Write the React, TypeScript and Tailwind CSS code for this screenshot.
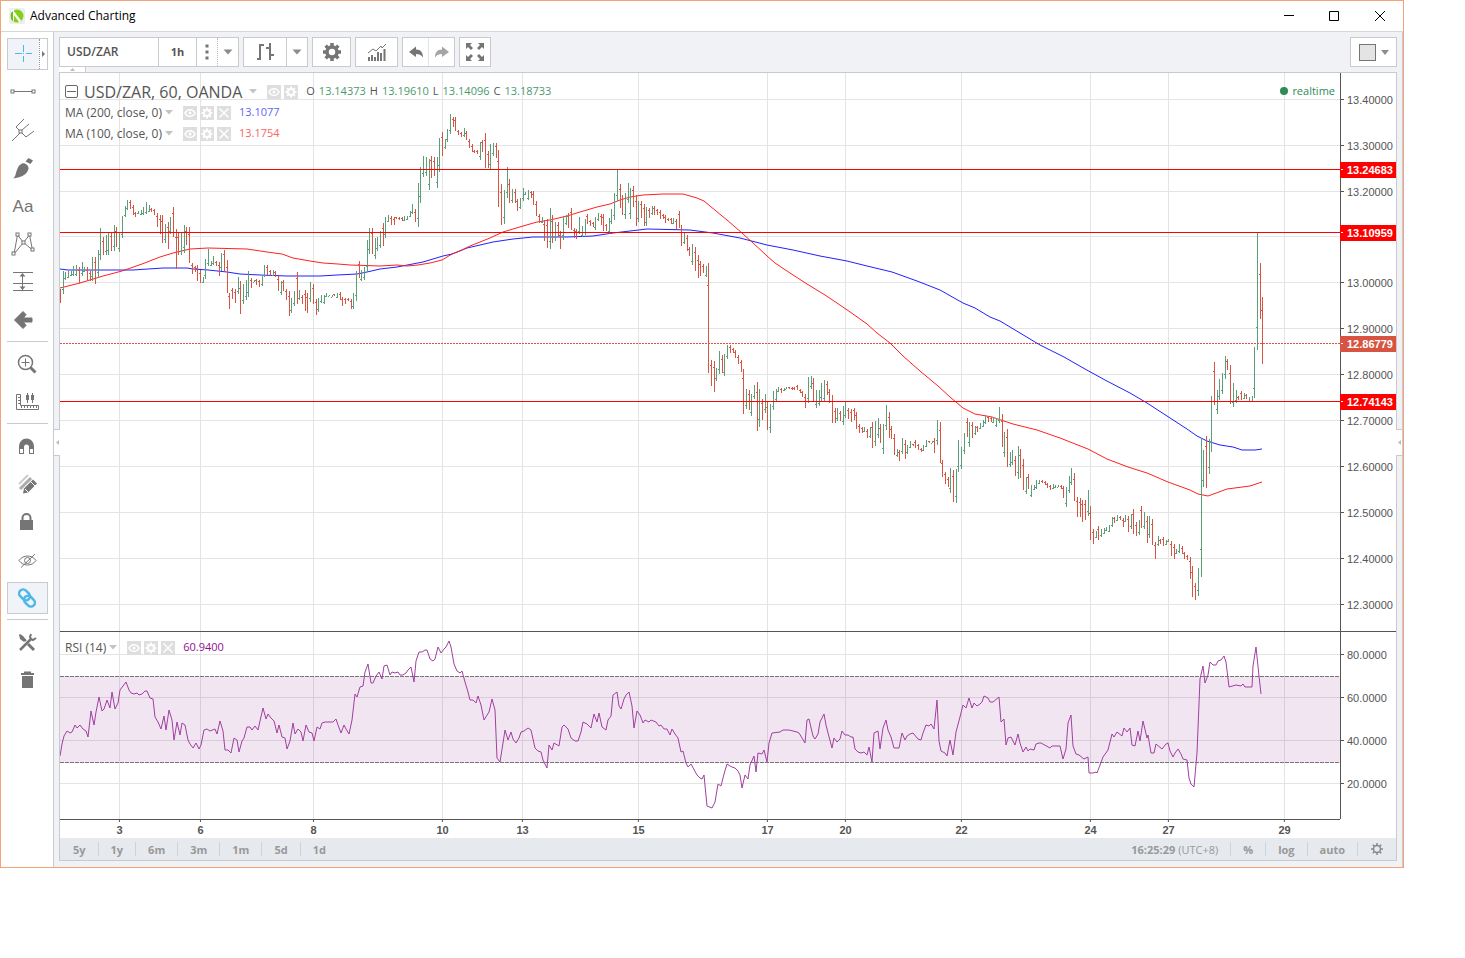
import React from 'react';

const GRID_X = [119, 200, 313, 442, 522, 638, 767, 845, 961, 1090, 1168, 1284];
const DAYS = ['3', '6', '8', '10', '13', '15', '17', '20', '22', '24', '27', '29'];

const PRICES = [13.4, 13.3, 13.2, 13.1, 13.0, 12.9, 12.8, 12.7, 12.6, 12.5, 12.4, 12.3];
const RSI_TICKS = [80, 60, 40, 20];
const RANGES = ['5y', '1y', '6m', '3m', '1m', '5d', '1d'];

const LEVELS = [
  { price: 13.24683, live: false },
  { price: 13.10959, live: false },
  { price: 12.86779, live: true },
  { price: 12.74143, live: false },
];

// Canvas space: x 60..1340, price pane y 73..631, RSI pane y 632..819
const LEFT = 60;
const WIDTH = 1280;
const PRICE_TOP = 73;
const PRICE_H = 558;
const RSI_TOP = 632;
const RSI_H = 187;
const BAR_STEP = 2.69;

const priceY = (p: number) => Math.floor(99.2 + (13.4 - p) * 459.1);
const rsiY = (v: number) => Math.floor(654.5 + (80 - v) * 2.15);
const pct = (v: number, start: number, size: number) => `${((v + 0.5 - start) / size) * 100}%`;

// + closes up, - closes down; high,low
const BARS = `-289,303 +271,294 +272,280 +271,278 +271,276 +266,276 +265,276 -267,283 +262,276 +267,272 -267,280 -271,281
+257,281 -257,284 +250,278 +228,260 -237,255 +235,255 +232,255 -232,251 +225,251 -227,247 +233,252 +216,238 +206,217 +200,210
-200,209 -205,215 -212,217 +211,214 +210,215 +207,215 +202,214 +205,212 -208,212 -209,215 -213,227 -215,234 -215,243 +224,243
-222,249 +217,234 -207,237 -229,269 -233,255 +233,255 +225,253 -227,245 -227,263 -263,274 -266,272 -265,281 -270,283 +277,283
+259,279 +249,266 +261,266 +256,265 -261,266 -262,276 +253,271 -250,271 -260,293 -293,309 -288,299 -289,303 +277,294 -281,314
+284,304 +280,300 +271,297 -278,288 +280,282 -279,285 -280,287 +276,286 +265,277 -265,275 -270,276 +270,276 -271,277 -276,291
+281,295 -280,291 -289,300 -291,316 +298,313 +291,306 -272,304 +290,300 -295,304 -290,311 -293,313 +282,302 -284,304 -299,315
+298,312 +295,303 +295,304 +293,297 +295,296 +295,297 -294,296 +293,298 -292,300 -297,306 -298,304 -298,301 -299,309 +293,309
+271,301 -261,278 +270,281 +267,280 +240,272 +228,254 -228,254 +238,259 +237,251 +231,248 -223,246 +217,238 +215,222 -216,225
-217,225 -217,219 -217,220 -217,221 +216,221 +216,220 +211,217 +204,214 -209,222 +183,227 +167,203 +156,177 +157,176 +159,190
-156,178 -157,176 +157,188 +138,172 -132,156 +139,149 +129,142 +114,134 -117,127 -117,131 -130,135 -132,137 +128,137 -131,140
-139,148 -144,152 -150,153 -150,154 +142,160 -140,152 -133,168 -151,168 +144,169 +143,156 -143,158 -150,207 -184,225 +190,224
+167,198 -179,203 +189,203 -189,203 -199,211 +198,209 +188,201 +192,195 +190,200 -191,198 -191,205 -201,216 -214,223 +217,223
-220,241 -219,248 +208,249 -215,243 +222,241 -222,237 -231,249 +216,240 +215,225 -213,228 -208,230 -228,238 -229,239 +217,234
+226,237 +219,235 -214,224 -220,226 -222,227 +217,230 +213,221 -214,225 -214,231 -224,231 +218,234 +209,224 +193,220 +169,201
-184,208 -195,215 +193,219 +183,203 +188,219 -186,207 -195,226 +201,222 -201,218 -204,226 +207,226 -208,218 +206,215 -206,215
-209,215 -210,219 -214,219 -215,223 -218,221 -218,224 +218,224 -219,229 -211,228 -225,246 +232,244 -235,251 -247,256 +244,265
-247,271 -255,278 -261,276 -264,273 +266,277 -263,373 -360,386 -361,392 +368,381 +351,374 -355,373 +354,376 +345,359 -345,353
-348,353 -350,358 -355,364 -360,372 -369,414 +389,409 -390,410 +394,416 +385,399 -382,431 +389,427 -399,420 +394,413 -401,430
+404,433 +391,410 +389,401 +387,392 -388,393 +388,391 +387,389 -387,389 -387,390 -387,390 -385,390 -389,393 -391,397 -394,408
+377,403 +376,389 -378,402 +390,408 +390,406 +383,401 +380,402 -381,395 -389,403 -395,423 -408,423 +408,421 -411,421 +406,425
+401,418 -408,419 -409,422 -408,420 -412,429 -424,433 -427,433 +427,432 -429,438 +427,438 -422,448 +421,446 +418,438 -424,443
+424,454 +405,430 -412,438 -426,439 -434,455 +449,457 -450,461 +438,454 -440,459 +445,454 +441,448 -444,446 -440,448 -444,450
-448,452 +445,451 +440,447 -441,443 +441,443 -438,453 +420,445 -422,463 -460,477 -472,484 -477,487 +468,493 -470,502 +469,503
+440,472 +447,469 +433,454 -418,437 +422,447 -422,438 +426,435 -426,432 +423,429 +420,427 +415,424 -416,422 -417,422 +417,423
+418,427 +407,423 -414,447 +432,457 -429,467 +452,467 +450,465 -456,476 +446,479 -449,478 -459,490 +477,494 -474,489 +485,497
+485,490 +480,489 +480,484 -480,483 -481,485 -483,488 -485,490 +484,489 +485,488 +485,487 -485,489 -486,498 +487,507 +476,493
+468,485 -473,501 -497,517 -498,517 -500,522 -500,520 +490,516 -506,540 -529,544 +531,538 -526,540 +529,537 +528,534 +527,531
+525,532 +517,527 -517,523 +515,521 -516,520 -518,527 +515,522 -516,532 +514,529 -509,534 -522,536 +520,535 -506,528 +512,529
-516,543 +516,538 -519,545 -542,559 +536,546 -539,544 -537,546 +540,545 +539,542 -541,556 -544,559 +549,554 +544,553 -546,554
-552,559 -555,560 -557,579 -566,597 -583,600 +568,596 +438,577 +450,487 -436,488 +439,474 +396,452 -362,405 +390,414 +379,400
+373,394 +356,379 -359,370 -365,404 +383,407 +390,403 -396,400 -391,400 +393,399 -394,399 +397,402 +396,402 +347,398 +233,350
-263,319 -297,364`
  .split(/\s+/)
  .map((token, i) => {
    const [high, low] = token.slice(1).split(',').map(Number);
    return { x: Math.floor(60.5 + BAR_STEP * i) + 0.5, high, low, up: token[0] === '+' };
  });

const MA_100 =
  '60,288 80,283 103,276 122,271 142,264 160,257 173,253 190,249 208,248 247,249 267,252 282,254 293,258 310,261 323,263 338,264 350,265 380,266 397,265 407,266 418,265 430,263 442,260 452,254 460,251 470,246 490,238 503,232 513,229 523,226 537,222 550,220 567,216 580,212 597,207 610,204 620,200 630,197 643,195 663,194 683,194 690,196 697,198 704,201 710,206 727,220 742,233 752,242 767,256 775,263 790,273 807,284 825,295 837,303 853,314 867,324 877,333 890,343 903,356 920,371 938,386 950,397 963,408 975,414 992,417 1013,424 1037,430 1060,438 1088,449 1107,459 1128,467 1147,473 1168,482 1190,490 1198,494 1208,496 1227,489 1250,486 1262,482';
const MA_200 =
  '60,269 68,270 133,270 148,269 163,268 187,268 193,269 208,270 227,272 240,274 260,275 287,276 320,276 337,275 357,274 367,272 380,269 397,267 423,262 443,256 452,254 467,248 493,242 513,239 533,237 567,237 593,236 613,233 630,231 647,229 690,230 713,233 740,238 767,245 793,250 820,256 847,261 867,266 892,272 917,281 940,290 963,303 975,308 990,317 1000,321 1020,333 1040,345 1064,357 1085,369 1105,380 1130,393 1147,403 1167,416 1187,429 1197,436 1207,441 1220,445 1233,447 1242,450 1255,450 1262,449';
const RSI =
  '60,756 62,744 64,736 67,731 70,733 72,732 75,725 77,728 80,725 83,729 86,731 88,737 91,711 94,725 96,712 99,697 102,711 104,709 107,700 110,708 112,692 115,709 118,703 120,690 123,686 126,682 129,690 131,693 134,694 137,693 139,695 142,694 145,691 147,691 150,698 153,699 155,717 158,722 161,729 164,716 166,730 169,710 172,720 174,740 177,722 180,735 182,723 185,725 188,740 190,744 193,748 196,743 199,749 201,745 204,730 207,729 210,731 215,729 217,734 220,721 223,731 225,750 228,750 231,753 234,738 237,740 239,752 242,741 244,738 247,727 250,727 252,730 255,726 258,730 260,721 263,708 266,719 268,714 271,718 274,721 277,733 279,725 282,737 285,738 287,749 290,741 293,723 295,734 298,729 301,732 303,741 306,725 309,732 312,733 314,741 317,727 320,729 322,723 325,722 333,722 336,719 338,725 341,733 344,725 346,729 349,734 352,720 355,694 357,697 360,687 363,686 365,672 368,664 371,683 373,683 376,676 379,672 382,679 384,666 387,665 390,675 392,672 395,673 398,672 400,675 403,675 406,673 408,670 411,667 414,682 416,661 419,652 422,652 425,650 427,650 430,659 433,661 435,659 438,647 441,653 444,649 446,647 449,641 451,647 454,664 457,671 460,673 462,671 465,682 468,692 470,700 473,700 476,703 478,696 481,705 484,720 489,712 492,699 495,710 497,758 500,762 503,743 505,730 508,740 511,732 513,739 516,743 519,738 521,732 524,731 528,728 531,730 533,739 535,748 538,751 541,752 543,760 547,768 549,745 552,750 554,743 559,746 562,727 564,725 568,729 571,738 575,741 578,741 581,732 583,722 587,724 591,728 594,714 597,722 599,713 602,727 606,730 608,720 611,716 613,695 617,692 619,706 621,709 624,699 626,695 629,692 632,706 634,728 637,711 640,715 643,723 645,720 649,722 651,720 656,722 659,726 661,725 664,729 667,729 670,735 672,729 675,734 678,738 681,752 683,751 686,763 688,767 691,764 697,775 700,778 702,779 704,775 707,806 712,808 715,802 718,784 721,786 724,774 727,764 730,766 732,767 735,768 738,771 740,775 742,788 745,775 748,779 750,765 754,756 756,772 758,753 762,754 764,750 767,762 769,743 772,733 780,732 783,730 789,730 797,732 799,733 805,743 807,720 809,719 813,736 815,739 818,734 820,722 824,714 826,725 828,733 832,748 834,738 837,742 840,739 842,731 845,735 848,735 851,737 853,737 855,749 858,752 861,753 864,752 867,755 869,747 872,762 874,733 878,731 880,749 883,728 886,720 888,730 891,737 894,748 899,748 902,733 905,740 907,736 910,734 913,733 918,739 921,740 923,733 926,725 929,726 931,724 934,729 937,700 939,741 941,751 945,753 947,756 950,740 953,755 956,732 960,717 963,705 966,708 969,698 972,708 974,703 977,706 980,704 982,702 984,696 988,698 990,702 993,702 999,697 1001,722 1004,719 1006,745 1008,738 1011,737 1015,745 1018,734 1020,743 1023,752 1026,747 1028,751 1030,749 1034,750 1036,744 1039,743 1041,743 1050,748 1052,746 1060,746 1063,759 1066,749 1068,723 1071,715 1073,746 1076,754 1079,755 1084,759 1088,757 1089,773 1093,773 1096,772 1097,773 1103,757 1108,750 1112,734 1114,737 1117,732 1122,736 1124,728 1127,732 1130,728 1132,745 1135,746 1138,731 1140,741 1143,721 1147,738 1148,735 1151,753 1154,753 1156,744 1162,749 1166,744 1168,743 1170,751 1173,757 1175,753 1178,749 1181,754 1183,759 1187,760 1189,778 1191,784 1194,787 1197,753 1200,679 1203,666 1205,683 1208,675 1210,662 1213,665 1216,665 1218,661 1221,660 1224,656 1226,662 1229,687 1236,685 1241,686 1243,684 1245,687 1252,687 1253,666 1256,647 1259,676 1261,694';

/* ---------- icons, all drawn around a 0,0 centre ---------- */

const Icon: React.FC<{ size?: number; children: React.ReactNode }> = ({ size = 28, children }) => (
  <svg width={size} height={size} viewBox={`${-size / 2} ${-size / 2} ${size} ${size}`} fill="none" aria-hidden="true" className="shrink-0">
    {children}
  </svg>
);

const Node: React.FC<{ x: number; y: number }> = ({ x, y }) => (
  <rect x={x - 1.5} y={y - 1.5} width="3" height="3" fill="#fff" stroke="#757575" />
);

const Caret: React.FC = () => (
  <svg width="10" height="6" viewBox="0 0 10 6" aria-hidden="true" className="shrink-0">
    <path d="M0.5 0.5h9L5 5.5z" fill="#8c8c8c" />
  </svg>
);

const GEAR_TEETH = [0, 45, 90, 135, 180, 225, 270, 315];

const GearIcon: React.FC<{ size: number; color: string; ring: number; tooth: number; stroke: number }> = ({ size, color, ring, tooth, stroke }) => (
  <Icon size={size}>
    <circle r={ring} stroke={color} strokeWidth={stroke} />
    {GEAR_TEETH.map((a) => (
      <path key={a} d={`M0 ${-ring}V${-ring - tooth}`} stroke={color} strokeWidth={stroke} transform={`rotate(${a})`} />
    ))}
  </Icon>
);

const CrosshairIcon = () => (
  <Icon>
    <path d="M-9-.5h7M2-.5h6M-.5-9v7M-.5 2v6" stroke="#4cb8e6" />
    <path d="M-1-1h1v1h-1z" fill="#4cb8e6" />
  </Icon>
);

const DRAW_TOOLS = [
  {
    label: 'Trend line',
    icon: (
      <Icon>
        <path d="M-9-.5H9" stroke="#757575" />
        <Node x={-10.5} y={-0.5} />
        <Node x={10.5} y={-0.5} />
      </Icon>
    ),
  },
  {
    label: 'Pitchfork',
    icon: (
      <Icon>
        <path d="M-11 11l8-8M1-11l-8 8L3 7l8-6M-1 0l7-6" stroke="#757575" />
        <Node x={-2.5} y={1.5} />
      </Icon>
    ),
  },
  {
    label: 'Brush',
    icon: (
      <Icon>
        <path d="M-10 10.5C-6 9-8-1-1-4.500c3-1 7 2 6.500 5.500C4 7-3 9.500-10 10.500z" fill="#757575" />
        <path d="M2.500-6.500L5.500-10l4.500 2.500-2.500 3.500z" fill="#757575" />
      </Icon>
    ),
  },
  { label: 'Text', icon: <span className="font-['Liberation_Sans',sans-serif] text-[17px] leading-none text-[#757575]">Aa</span> },
  {
    label: 'Pattern',
    icon: (
      <Icon>
        <path d="M-9 10L-5.500-9 .5-1.500 6.500-9l3 15-9-7.500z" stroke="#757575" />
        <Node x={-5.5} y={-9.5} />
        <Node x={6.5} y={-9.5} />
        <Node x={0.5} y={-1.5} />
        <Node x={-9.5} y={9.5} />
        <Node x={9.5} y={5.5} />
      </Icon>
    ),
  },
  {
    label: 'Long position',
    icon: (
      <Icon>
        <path d="M-10-9.500H10M-10 1.500H10M-10 8.500H10M-.5-8V8" stroke="#757575" />
        <path d="M-.5-9l3 3.500h-6zM-.5 8l3-3.500h-6z" fill="#757575" />
      </Icon>
    ),
  },
  {
    label: 'Arrow mark left',
    icon: (
      <Icon>
        <path d="M-8.500 0L0-8.500l3 3L.5-2H9v4H.5L3 5.500l-3 3z" fill="#757575" stroke="#757575" strokeLinejoin="round" />
      </Icon>
    ),
  },
];

const VIEW_TOOLS = [
  {
    label: 'Zoom in',
    icon: (
      <Icon>
        <circle cx="-1.500" cy="-1.500" r="7" stroke="#757575" strokeWidth="1.500" />
        <path d="M-5.500-1.500h8M-1.500-5.500v8" stroke="#757575" />
        <path d="M3.500 3.500l5 5" stroke="#757575" strokeWidth="3" />
      </Icon>
    ),
  },
  {
    label: 'Measure',
    icon: (
      <Icon>
        <path d="M-10.500-7.500h4v11h18v4h-22z" stroke="#757575" />
        <path d="M-9-4.500h2M-9-1.500h2M-9 1.500h2M-5.500 4v2M-2.500 4v2M.5 4v2M3.500 4v2M6.500 4v2M9.500 4v2M.5-9v10M5.500-9v10" stroke="#757575" />
        <path d="M-1-7h3v5h-3zM4-7h3v5H4z" fill="#757575" />
      </Icon>
    ),
  },
];

const MODE_TOOLS = [
  {
    label: 'Magnet mode',
    icon: (
      <Icon>
        <path d="M-8 8V0a7.500 7.500 0 0 1 15 0v8H2V1a2.500 2.500 0 0 0-5 0v7z" fill="#757575" />
        <path d="M-7 3h3v4h-3zM3 3h3v4H3z" fill="#fff" />
      </Icon>
    ),
  },
  {
    label: 'Stay in drawing mode',
    icon: (
      <Icon>
        <path d="M-8 0l9-9" stroke="#ccc" strokeWidth="2" />
        <path d="M-7 5L4-6" stroke="#aaa" strokeWidth="3" />
        <path d="M-4 9.500l1-5 9-9 4 4-9 9z" fill="#757575" />
        <path d="M-2 5l3 3M4-2l4 4" stroke="#fff" />
      </Icon>
    ),
  },
  {
    label: 'Lock drawings',
    icon: (
      <Icon>
        <path d="M-7-2H6v10H-7z" fill="#757575" />
        <path d="M-4.500-2v-2a4 4 0 0 1 8 0v2" stroke="#757575" strokeWidth="2" />
      </Icon>
    ),
  },
  {
    label: 'Hide drawings',
    icon: (
      <Icon>
        <path d="M-8 .5C-4-5.500 5-5.500 9 .5 5 6.500-4 6.500-8 .5z" stroke="#757575" />
        <circle cx=".5" cy=".5" r="3" stroke="#757575" />
        <path d="M-6 7.500L8-6" stroke="#757575" />
      </Icon>
    ),
  },
];

const LinkIcon = () => (
  <Icon>
    <g stroke="#4cb8e6" strokeWidth="2.500" transform="translate(-1 0) rotate(45)">
      <rect x="-10" y="-4.500" width="12" height="8" rx="4" />
      <rect x="-2" y="-3.500" width="12" height="8" rx="4" />
    </g>
  </Icon>
);

const EDIT_TOOLS = [
  {
    label: 'Drawing settings',
    icon: (
      <Icon>
        <path d="M-7 8L4-3" stroke="#757575" strokeWidth="2.500" />
        <path d="M4-8l-1 3 1 2 2 1 3-2M-7-7L-1-1" stroke="#757575" strokeWidth="2" />
        <path d="M-8-8l4 2 3 4-2 2-4-3z" fill="#757575" />
        <path d="M1 2l6 6" stroke="#757575" strokeWidth="3" />
      </Icon>
    ),
  },
  {
    label: 'Remove drawings',
    icon: (
      <Icon>
        <path d="M-6-6H7M-3-7.500h7" stroke="#757575" strokeWidth="2" />
        <path d="M-5-4H6V8H-5z" fill="#757575" />
      </Icon>
    ),
  },
];

/* ---------- legend ---------- */

const MiniButton: React.FC<{ label: string; children: React.ReactNode }> = ({ label, children }) => (
  <button type="button" aria-label={label} className="flex size-[14px] items-center justify-center bg-[#dedede]">
    {children}
  </button>
);

const EyeMini = () => (
  <MiniButton label="Show or hide">
    <Icon size={14}>
      <path d="M-5 0C-3-4.500 3-4.500 5 0 3 4.500-3 4.500-5 0z" stroke="#fff" strokeWidth="1.500" />
      <circle r="1.500" fill="#fff" />
    </Icon>
  </MiniButton>
);

const GearMini = () => (
  <MiniButton label="Format">
    <GearIcon size={14} color="#fff" ring={3} tooth={2.5} stroke={2} />
  </MiniButton>
);

const CloseMini = () => (
  <MiniButton label="Remove">
    <Icon size={14}>
      <path d="M-4.500-4.500l9 9M4.500-4.500l-9 9" stroke="#fff" strokeWidth="1.500" />
    </Icon>
  </MiniButton>
);

const LegendCaret = () => (
  <svg width="8" height="5" viewBox="0 0 8 5" aria-hidden="true">
    <path d="M0 0h8L4 4.500z" fill="#c4c4c4" />
  </svg>
);

const StudyRow: React.FC<{ name: string; value: string; color: string }> = ({ name, value, color }) => (
  <div className="flex h-[21px] items-center text-[12px] text-[#555]">
    <span>{name}</span>
    <span className="ml-[3px] mr-[10px]">
      <LegendCaret />
    </span>
    <div className="flex gap-[3px]">
      <EyeMini />
      <GearMini />
      <CloseMini />
    </div>
    <span className={`ml-2 text-[11px] ${color}`}>{value}</span>
  </div>
);

const OHLC = [
  ['O', '13.14373'],
  ['H', '13.19610'],
  ['L', '13.14096'],
  ['C', '13.18733'],
];

const PriceLegend = () => (
  <div className="absolute left-[5px] top-[8px]">
    <div className="flex h-[21px] items-center text-[#555]">
      <button type="button" aria-label="Collapse legend" className="relative mr-[6px] size-[13px] rounded-[2px] border border-[#666]">
        <span className="absolute inset-x-[1px] top-[5px] h-px bg-[#666]"></span>
      </button>
      <span className="text-[16px] leading-none">USD/ZAR, 60, OANDA</span>
      <span className="ml-[7px] mr-[10px]">
        <LegendCaret />
      </span>
      <div className="flex gap-[3px]">
        <EyeMini />
        <GearMini />
      </div>
      <dl className="ml-2 flex gap-1 text-[11px]">
        {OHLC.map(([k, v]) => (
          <div key={k} className="flex gap-1">
            <dt>{k}</dt>
            <dd className="text-[#4a9a6d]">{v}</dd>
          </div>
        ))}
      </dl>
    </div>
    <StudyRow name="MA (200, close, 0)" value="13.1077" color="text-[#6464fa]" />
    <StudyRow name="MA (100, close, 0)" value="13.1754" color="text-[#fa6464]" />
  </div>
);

/* ---------- chart panes ---------- */

const Grid: React.FC<{ rows: number[]; top: number; height: number }> = ({ rows, top, height }) => (
  <path
    d={GRID_X.map((x) => `M${x + 0.5} ${top}v${height}`).join('') + rows.map((y) => `M${LEFT} ${y + 0.5}h${WIDTH}`).join('')}
    stroke="#e4e4e4"
    shapeRendering="crispEdges"
  />
);

const PricePlot = () => (
  <svg viewBox={`${LEFT} ${PRICE_TOP} ${WIDTH} ${PRICE_H}`} preserveAspectRatio="none" fill="none" className="block h-full w-full" role="img" aria-label="USD/ZAR hourly bars">
    <Grid rows={PRICES.map(priceY)} top={PRICE_TOP} height={PRICE_H} />
    <polyline points={MA_200} stroke="#2020ff" />
    <polyline points={MA_100} stroke="#ff2020" />
    <g shapeRendering="crispEdges">
      {BARS.map(({ x, high, low, up }) => {
        const span = low - high;
        const open = Math.round(up ? low - span * 0.2 : high + span * 0.2) + 0.5;
        return <path key={x} d={`M${x} ${high}V${low}M${x - 1.5} ${open}h1`} stroke={up ? '#5b9e7a' : '#d75442'} />;
      })}
      {LEVELS.map(({ price, live }) => (
        <path
          key={price}
          d={`M${LEFT} ${priceY(price) + 0.5}h${WIDTH}`}
          stroke={live ? '#d75442' : '#ff0000'}
          strokeDasharray={live ? '2 1' : undefined}
        />
      ))}
    </g>
  </svg>
);

const RsiPlot = () => (
  <svg viewBox={`${LEFT} ${RSI_TOP} ${WIDTH} ${RSI_H}`} preserveAspectRatio="none" fill="none" className="block h-full w-full" role="img" aria-label="RSI 14">
    <Grid rows={RSI_TICKS.map(rsiY)} top={RSI_TOP} height={RSI_H} />
    <rect x={LEFT} y="676" width={WIDTH} height="87" fill="#800080" fillOpacity="0.1" />
    <path d={`M${LEFT} 676.500h${WIDTH}M${LEFT} 762.500h${WIDTH}`} stroke="#777" strokeDasharray="4 1" shapeRendering="crispEdges" />
    <polyline points={RSI} stroke="#a040a0" />
  </svg>
);

const AxisLabel: React.FC<{ top: string; text: string }> = ({ top, text }) => (
  <div className="absolute inset-x-0 flex -translate-y-1/2 items-center gap-[3px]" style={{ top }}>
    <span className="h-px w-[3px] bg-[#555]"></span>
    <span>{text}</span>
  </div>
);

const PriceAxis = () => (
  <div className="relative w-[56px] shrink-0 border-l border-[#555] text-[11px] leading-4 text-[#555]">
    {PRICES.filter((p) => p !== 13.1).map((p) => (
      <AxisLabel key={p} top={pct(priceY(p), PRICE_TOP, PRICE_H)} text={p.toFixed(5)} />
    ))}
    {LEVELS.map(({ price, live }) => (
      <div
        key={price}
        className={`absolute -left-px right-0 flex h-4 -translate-y-1/2 items-center gap-1 font-bold text-white ${live ? 'bg-[#d75442]' : 'bg-[#ff0000]'}`}
        style={{ top: pct(priceY(price), PRICE_TOP, PRICE_H) }}
      >
        <span className="ml-px h-px w-[2px] bg-white"></span>
        {price.toFixed(5)}
      </div>
    ))}
  </div>
);

const RsiAxis = () => (
  <div className="relative w-[56px] shrink-0 border-l border-[#555] text-[11px] leading-4 text-[#555]">
    {RSI_TICKS.map((v) => (
      <AxisLabel key={v} top={pct(rsiY(v), RSI_TOP, RSI_H)} text={v.toFixed(4)} />
    ))}
  </div>
);

const TimeAxis = () => (
  <div className="flex h-[19px]">
    <div className="relative flex-1 border-t border-[#555] text-[11px] font-bold leading-4 text-[#555]">
      {GRID_X.map((x, i) => (
        <div key={x} className="absolute top-0 flex -translate-x-1/2 flex-col items-center" style={{ left: pct(x, LEFT, WIDTH) }}>
          <span className="h-[2px] w-px bg-[#555]"></span>
          <span>{DAYS[i]}</span>
        </div>
      ))}
    </div>
    <div className="w-[56px] shrink-0"></div>
  </div>
);

/* ---------- bars around the chart ---------- */

const TitleBar = () => (
  <header className="flex h-[31px] items-center border-b border-[#d5d7da] bg-white pl-[8px]">
    <svg width="16" height="16" viewBox="0 0 16 16" aria-hidden="true">
      <rect width="16" height="16" rx="2" fill="#eceeec" />
      <circle cx="8" cy="8" r="6.500" fill="#84d018" />
      <path d="M2 2L5 1v12l-2-1zM4 2l8 10.500-1.500 2L4 6z" fill="#fff" />
      <path d="M2 5v6l2 2.500V3z" fill="#6dbf10" />
    </svg>
    <h1 className="ml-[5px] flex-1 font-['Open_Sans',sans-serif] text-[12px] leading-none text-black">Advanced Charting</h1>
    <div className="flex pr-[1px]">
      <button type="button" aria-label="Minimize" className="flex h-[30px] w-[46px] items-center justify-center">
        <Icon size={12}>
          <path d="M-5-.5H5" stroke="#000" />
        </Icon>
      </button>
      <button type="button" aria-label="Maximize" className="flex h-[30px] w-[45px] items-center justify-center">
        <Icon size={12}>
          <path d="M-5.500-4.500h9v9h-9z" stroke="#000" />
        </Icon>
      </button>
      <button type="button" aria-label="Close" className="flex h-[30px] w-[45px] items-center justify-center">
        <Icon size={12}>
          <path d="M-5-5L5 5M5-5L-5 5" stroke="#000" />
        </Icon>
      </button>
    </div>
  </header>
);

const Divider = () => <hr className="mb-[3px] ml-[6px] mr-[5px] mt-[2px] border-[#c8cacd]" />;

const SideBar = () => (
  <nav aria-label="Drawing tools" className="w-[53px] shrink-0 border-r border-[#c8cacd] bg-white pt-[3px]">
    <div className="flex h-[38px] items-center pl-[6px]">
      <div className="flex h-8 w-[41px] border border-[#c8cacd]">
        <button type="button" aria-label="Crosshair" className="flex w-[31px] items-center justify-center bg-[#f0f3f8]">
          <CrosshairIcon />
        </button>
        <button type="button" aria-label="More cursors" className="flex flex-1 items-center justify-center border-l border-dotted border-[#999]">
          <svg width="3" height="6" viewBox="0 0 3 6" aria-hidden="true">
            <path d="M0 0l3 3-3 3z" fill="#757575" />
          </svg>
        </button>
      </div>
    </div>
    {DRAW_TOOLS.map((t) => (
      <button key={t.label} type="button" aria-label={t.label} className="flex h-[38px] w-[44px] items-center justify-center">
        {t.icon}
      </button>
    ))}
    <Divider />
    {VIEW_TOOLS.map((t) => (
      <button key={t.label} type="button" aria-label={t.label} className="flex h-[38px] w-full items-center justify-center">
        {t.icon}
      </button>
    ))}
    <Divider />
    {MODE_TOOLS.map((t) => (
      <button key={t.label} type="button" aria-label={t.label} className="flex h-[38px] w-full items-center justify-center">
        {t.icon}
      </button>
    ))}
    <div className="flex h-[38px] items-center pl-[6px]">
      <button type="button" aria-label="Link charts" aria-pressed="true" className="flex h-8 w-[41px] items-center justify-center border border-[#c8cacd] bg-[#f0f3f8]">
        <LinkIcon />
      </button>
    </div>
    <Divider />
    {EDIT_TOOLS.map((t) => (
      <button key={t.label} type="button" aria-label={t.label} className="flex h-[38px] w-full items-center justify-center">
        {t.icon}
      </button>
    ))}
  </nav>
);

const TopBar = () => (
  <div className="flex h-[35px] items-end gap-1 text-[#555]">
    <div className="flex h-[30px] w-[180px] border border-[#c8cacd] bg-white">
      <input aria-label="Symbol" defaultValue="USD/ZAR" className="w-[98px] px-[7px] text-[12px] font-semibold outline-none" />
      <button type="button" className="w-[38px] border-l border-[#c8cacd] text-[11px] font-bold">
        1h
      </button>
      <button type="button" aria-label="Favourite intervals" className="flex w-[21px] items-center justify-center border-l border-[#c8cacd]">
        <Icon size={18}>
          <path d="M-1.500-7.500h3v3h-3zM-1.500-1.500h3v3h-3zM-1.500 4.500h3v3h-3z" fill="#757575" />
        </Icon>
      </button>
      <button type="button" aria-label="All intervals" className="flex flex-1 items-center justify-center border-l border-dotted border-[#bbb]">
        <Caret />
      </button>
    </div>
    <div className="flex h-[30px] w-[65px] border border-[#c8cacd] bg-white">
      <button type="button" aria-label="Bars" className="flex w-[42px] items-center justify-center">
        <Icon size={22}>
          <path d="M-5-8V8M-8 7h3M-5-7h4M5-9V8M1-4h4M5 3h4" stroke="#757575" strokeWidth="2" />
        </Icon>
      </button>
      <button type="button" aria-label="Chart style" className="flex flex-1 items-center justify-center border-l border-[#c8cacd]">
        <Caret />
      </button>
    </div>
    <button type="button" aria-label="Chart settings" className="flex h-[30px] w-[39px] items-center justify-center border border-[#c8cacd] bg-white">
      <GearIcon size={20} color="#757575" ring={5} tooth={4} stroke={3.5} />
    </button>
    <button type="button" aria-label="Indicators" className="flex h-[30px] w-[43px] items-center justify-center border border-[#c8cacd] bg-white">
      <Icon size={20}>
        <path d="M-8 9V5M-5 9V3M-2 9V5M1 9V0M4 9V1M7.500 9V-3" stroke="#757575" strokeWidth="2" />
        <path d="M-9 1l5-4 3 2 5-5 1 2 4-4" stroke="#757575" />
      </Icon>
    </button>
    <div className="flex h-[30px] w-[53px] border border-[#c8cacd] bg-white">
      <button type="button" aria-label="Undo" className="flex flex-1 items-center justify-center">
        <Icon size={18}>
          <path d="M-7 0L0-5.500v3C5-2.500 7 1 7 5.500 5 2.500 3 2 0 2v3z" fill="#757575" />
        </Icon>
      </button>
      <button type="button" aria-label="Redo" className="flex flex-1 items-center justify-center border-l border-[#e2e3e5]">
        <Icon size={18}>
          <path d="M7 0L0-5.500v3C-5-2.500-7 1-7 5.500-5 2.500-3 2 0 2v3z" fill="#a5a5a5" />
        </Icon>
      </button>
    </div>
    <button type="button" aria-label="Fullscreen" className="flex h-[30px] w-8 items-center justify-center border border-[#c8cacd] bg-white">
      <Icon size={20}>
        <path d="M-9-9h6l-2 2 3 3-2 2-3-3-2 2zM9-9H3l2 2-3 3 2 2 3-3 2 2zM-9 9h6l-2-2 3-3-2-2-3 3-2-2zM9 9H3l2-2-3-3 2-2 3 3 2-2z" fill="#757575" />
      </Icon>
    </button>
    <button type="button" aria-label="Select layout" className="ml-auto flex h-[30px] w-[47px] items-center justify-center gap-[5px] border border-[#c8cacd] bg-white">
      <span className="size-[17px] border border-[#757575] bg-[#e4e4e4]"></span>
      <svg width="8" height="5" viewBox="0 0 8 5" aria-hidden="true">
        <path d="M0 0h8L4 5z" fill="#8c8c8c" />
      </svg>
    </button>
  </div>
);

const BottomBar = () => (
  <footer className="flex h-[22px] items-center bg-[#e6e9ee] pl-px text-[11px] font-bold leading-none text-[#999]">
    {RANGES.map((r, i) => (
      <button key={r} type="button" className={`h-[14px] px-[12px] ${i > 0 ? 'border-l border-[#cfd2d7]' : ''}`}>
        {r}
      </button>
    ))}
    <div className="ml-auto flex h-[14px] items-center">
      <span className="pr-[12px]">
        16:25:29 <span className="font-normal">(UTC+8)</span>
      </span>
      <button type="button" className="h-full border-l border-[#cfd2d7] px-[12px]">
        %
      </button>
      <button type="button" className="h-full border-l border-[#cfd2d7] px-[12px]">
        log
      </button>
      <button type="button" className="h-full border-l border-[#cfd2d7] px-[12px]">
        auto
      </button>
      <button type="button" aria-label="Scale settings" className="flex h-full w-[39px] items-center justify-center border-l border-[#cfd2d7]">
        <GearIcon size={14} color="#888" ring={3.5} tooth={2.5} stroke={1.5} />
      </button>
    </div>
  </footer>
);

const SideHandle: React.FC<{ label: string; side: string }> = ({ label, side }) => (
  <button type="button" aria-label={label} className={`absolute top-[397px] flex h-[27px] w-[6px] items-center justify-center border-y border-[#c8cacd] bg-white ${side}`}>
    <svg width="3" height="5" viewBox="0 0 3 5" aria-hidden="true">
      <path d="M3 0v5L0 2.500z" fill="#bbb" />
    </svg>
  </button>
);

const App: React.FC = () => {
  return (
    <div className="min-h-screen bg-white font-['Open_Sans',sans-serif]">
      <div className="mr-[61px] border border-[#f0a478]">
        <TitleBar />
        <div className="flex">
          <SideBar />
          <main className="relative min-w-0 flex-1 border-r border-[#c8cacd] bg-[#f1f2f6] pb-[6px] pl-[5px] pr-[5px]">
            <TopBar />
            <button type="button" aria-label="Collapse toolbar" className="flex h-[5px] w-[27px] items-center justify-center border-r border-[#c8cacd] bg-white">
              <svg width="5" height="3" viewBox="0 0 5 3" aria-hidden="true">
                <path d="M0 3h5L2.500 0z" fill="#bbb" />
              </svg>
            </button>
            <section className="border border-[#c8cacd] bg-white font-['Liberation_Sans',sans-serif]">
              <div className="flex h-[558px]">
                <div className="relative min-w-0 flex-1 font-['Open_Sans',sans-serif]">
                  <PricePlot />
                  <PriceLegend />
                  <div className="absolute right-[5px] top-[10px] flex items-center gap-1 text-[11px] leading-4 text-[#2e8b57]">
                    <span className="size-2 rounded-full bg-[#2e8b57]"></span>
                    realtime
                  </div>
                </div>
                <PriceAxis />
              </div>
              <div className="flex h-[188px] border-t border-[#555]">
                <div className="relative min-w-0 flex-1 font-['Open_Sans',sans-serif]">
                  <RsiPlot />
                  <div className="absolute left-[5px] top-[5px]">
                    <StudyRow name="RSI (14)" value="60.9400" color="text-[#901090]" />
                  </div>
                </div>
                <RsiAxis />
              </div>
              <TimeAxis />
              <div className="font-['Open_Sans',sans-serif]">
                <BottomBar />
              </div>
            </section>
            <SideHandle label="Toggle drawing tools" side="left-0" />
            <SideHandle label="Toggle side panel" side="right-0" />
          </main>
        </div>
      </div>
    </div>
  );
};

export default App;
